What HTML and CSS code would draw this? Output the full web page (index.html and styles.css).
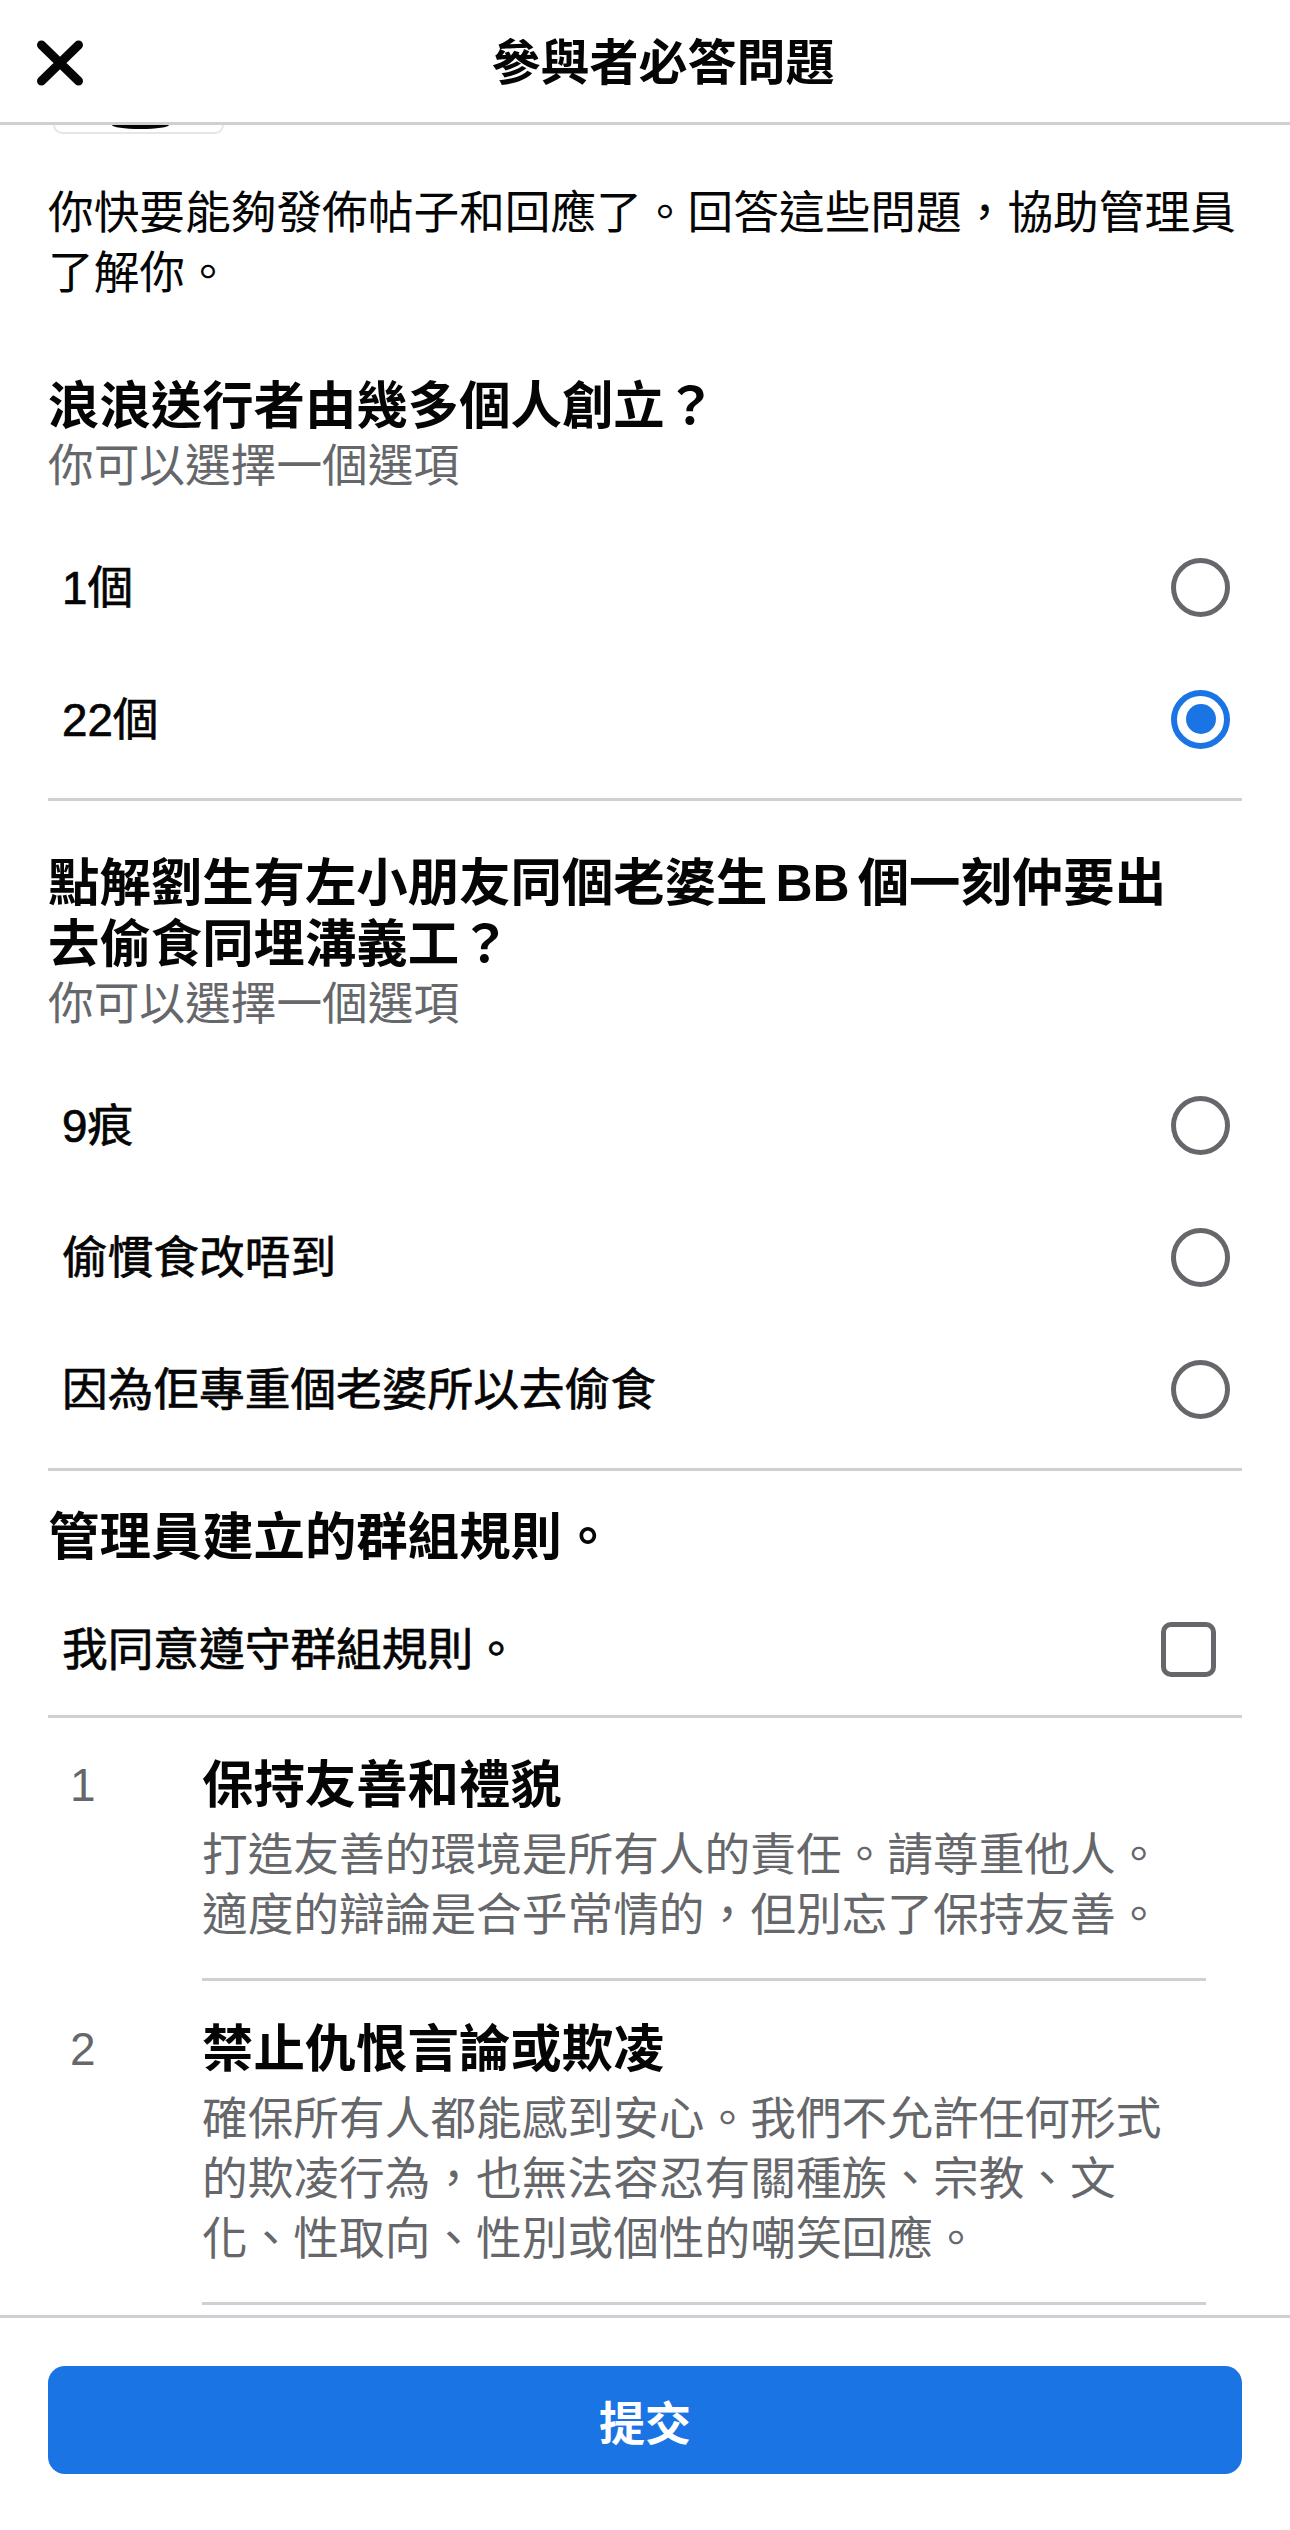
FILE: index.html
```
<!DOCTYPE html>
<html lang="zh-Hant">
  <head>
    <meta charset="utf-8" />
    <title>參與者必答問題</title>
    <link rel="stylesheet" href="styles.css">
  </head>
  <body>
    <div class="screen">
      <!-- top bar -->
      <header class="topBar">
        <button class="closeButton" aria-label="關閉">
          <svg width="48" height="48" viewBox="0 0 48 48">
            <path d="M5.5 6 L42.5 42 M42.5 6 L5.5 42" stroke="#050505" stroke-width="9" stroke-linecap="round" fill="none" />
          </svg>
        </button>
        <h1 class="topTitle">參與者必答問題</h1>
        <span></span>
      </header>

      <!-- scrolling content -->
      <main class="scrollArea">
        <div class="coverPeek"><span class="coverAvatar"></span></div>
        <div class="content">
          <p class="intro">你快要能夠發佈帖子和回應了。回答這些問題，協助管理員了解你。</p>

          <section class="question firstQuestion">
            <h2 class="questionTitle">浪浪送行者由幾多個人創立？</h2>
            <p class="hint">你可以選擇一個選項</p>
            <ul class="optionList">
              <li class="option"><span class="optionLabel">1個</span><span class="radio"></span></li>
              <li class="option"><span class="optionLabel">22個</span><span class="radio checked"></span></li>
            </ul>
          </section>

          <section class="question">
            <h2 class="questionTitle">點解劉生有左小朋友同個老婆生<span class="latinWord">BB</span>個一刻仲要出<br>去偷食同埋溝義工？</h2>
            <p class="hint">你可以選擇一個選項</p>
            <ul class="optionList">
              <li class="option"><span class="optionLabel">9痕</span><span class="radio"></span></li>
              <li class="option"><span class="optionLabel">偷慣食改唔到</span><span class="radio"></span></li>
              <li class="option"><span class="optionLabel">因為佢專重個老婆所以去偷食</span><span class="radio"></span></li>
            </ul>
          </section>

          <section class="rulesSection">
            <h2 class="questionTitle">管理員建立的群組規則。</h2>
            <div class="option agreeRow">
              <span class="optionLabel">我同意遵守群組規則。</span>
              <span class="checkbox"></span>
            </div>
          </section>

          <ol class="ruleList">
            <li class="rule">
              <span class="ruleNumber">1</span>
              <div class="ruleBody">
                <h3 class="ruleTitle">保持友善和禮貌</h3>
                <p class="ruleText">打造友善的環境是所有人的責任。請尊重他人。適度的辯論是合乎常情的，但別忘了保持友善。</p>
              </div>
            </li>
            <li class="rule">
              <span class="ruleNumber">2</span>
              <div class="ruleBody">
                <h3 class="ruleTitle">禁止仇恨言論或欺凌</h3>
                <p class="ruleText">確保所有人都能感到安心。我們不允許任何形式的欺凌行為，也無法容忍有關種族、宗教、文化、性取向、性別或個性的嘲笑回應。</p>
              </div>
            </li>
          </ol>
        </div>
      </main>

      <!-- bottom bar -->
      <footer class="bottomBar">
        <button class="submitButton">提交</button>
      </footer>
    </div>
  </body>
</html>
```

FILE: styles.css
```
body {
  margin: 0;
  background: #ffffff;
  color: #050505;
  font-family: "Liberation Sans", "Noto Sans CJK TC", sans-serif;
}

h1, h2, h3, p, ul, ol {
  margin: 0;
  padding: 0;
}

ul, ol {
  list-style: none;
}

button {
  font-family: inherit;
  border: none;
  background: none;
  padding: 0;
}

div.screen {
  display: flex;
  flex-direction: column;
  height: 2530px;
}

/* top bar */
header.topBar {
  flex: none;
  display: grid;
  grid-template-columns: 1fr auto 1fr;
  align-items: center;
  height: 125px;
  padding: 3px 0 0 36px;
  box-sizing: border-box;
  border-bottom: 3px solid #ced0d4;
}

button.closeButton {
  width: 48px;
  height: 48px;
  justify-self: start;
}

button.closeButton svg {
  display: block;
}

h1.topTitle {
  font-size: 49px;
  font-weight: 700;
  line-height: 60px;
}

/* content */
main.scrollArea {
  flex: 1;
  overflow: hidden;
}

div.coverPeek {
  display: flex;
  justify-content: center;
  width: 167px;
  height: 7px;
  margin-left: 53px;
  border: 2px solid #e4e6eb;
  border-top: none;
  border-radius: 0 0 14px 14px;
}

span.coverAvatar {
  display: block;
  width: 57px;
  height: 4px;
  margin-left: 4px;
  background: #050505;
  border-radius: 0 0 28px 28px / 0 0 4px 4px;
}

div.content {
  padding: 0 48px;
}

p.intro {
  margin-top: 50px;
  font-size: 45.7px;
  line-height: 60px;
}

section.question {
  padding-top: 52px;
  border-bottom: 3px solid #ced0d4;
}

section.firstQuestion {
  padding-top: 72px;
}

h2.questionTitle {
  font-size: 51.4px;
  font-weight: 700;
  line-height: 61px;
}

span.latinWord {
  margin: 0 8px;
}

p.hint {
  font-size: 45.7px;
  line-height: 60px;
  color: #65676b;
}

ul.optionList {
  margin-top: 24px;
  padding-bottom: 13px;
}

.option {
  display: flex;
  align-items: center;
  justify-content: space-between;
  height: 132px;
  padding: 0 12px 0 14px;
}

span.optionLabel {
  padding-top: 4px;
  font-size: 45.7px;
  line-height: 60px;
  -webkit-text-stroke: 0.7px #050505;
}

span.radio {
  display: grid;
  place-items: center;
  width: 59px;
  height: 59px;
  box-sizing: border-box;
  border: 5px solid #65676b;
  border-radius: 50%;
}

span.radio.checked {
  border: 6px solid #1b74e4;
}

span.radio.checked::after {
  content: "";
  width: 30px;
  height: 30px;
  border-radius: 50%;
  background: #1b74e4;
}

section.rulesSection {
  padding-top: 36px;
  border-bottom: 3px solid #ced0d4;
}

div.agreeRow {
  margin-top: 15px;
  padding-right: 26px;
}

span.checkbox {
  width: 55px;
  height: 55px;
  box-sizing: border-box;
  border: 5px solid #65676b;
  border-radius: 10px;
}

/* rules */
li.rule {
  display: flex;
  padding-left: 22px;
}

span.ruleNumber {
  flex: none;
  width: 132px;
  padding-top: 37px;
  font-size: 46px;
  line-height: 60px;
  color: #65676b;
}

div.ruleBody {
  flex: 1;
  margin-right: 36px;
  padding: 37px 30px 32px 0;
  border-bottom: 3px solid #ced0d4;
}

li.rule + li.rule span.ruleNumber,
li.rule + li.rule div.ruleBody {
  padding-top: 38px;
}

h3.ruleTitle {
  font-size: 51.4px;
  font-weight: 700;
  line-height: 60px;
}

p.ruleText {
  margin-top: 11px;
  font-size: 45.7px;
  line-height: 60px;
  color: #65676b;
}

/* bottom bar */
footer.bottomBar {
  flex: none;
  padding: 48px 48px 56px;
  border-top: 3px solid #ced0d4;
}

button.submitButton {
  display: block;
  width: 100%;
  height: 108px;
  border-radius: 17px;
  background: #1b74e4;
  color: #ffffff;
  font-size: 46px;
  font-weight: 700;
}
```
